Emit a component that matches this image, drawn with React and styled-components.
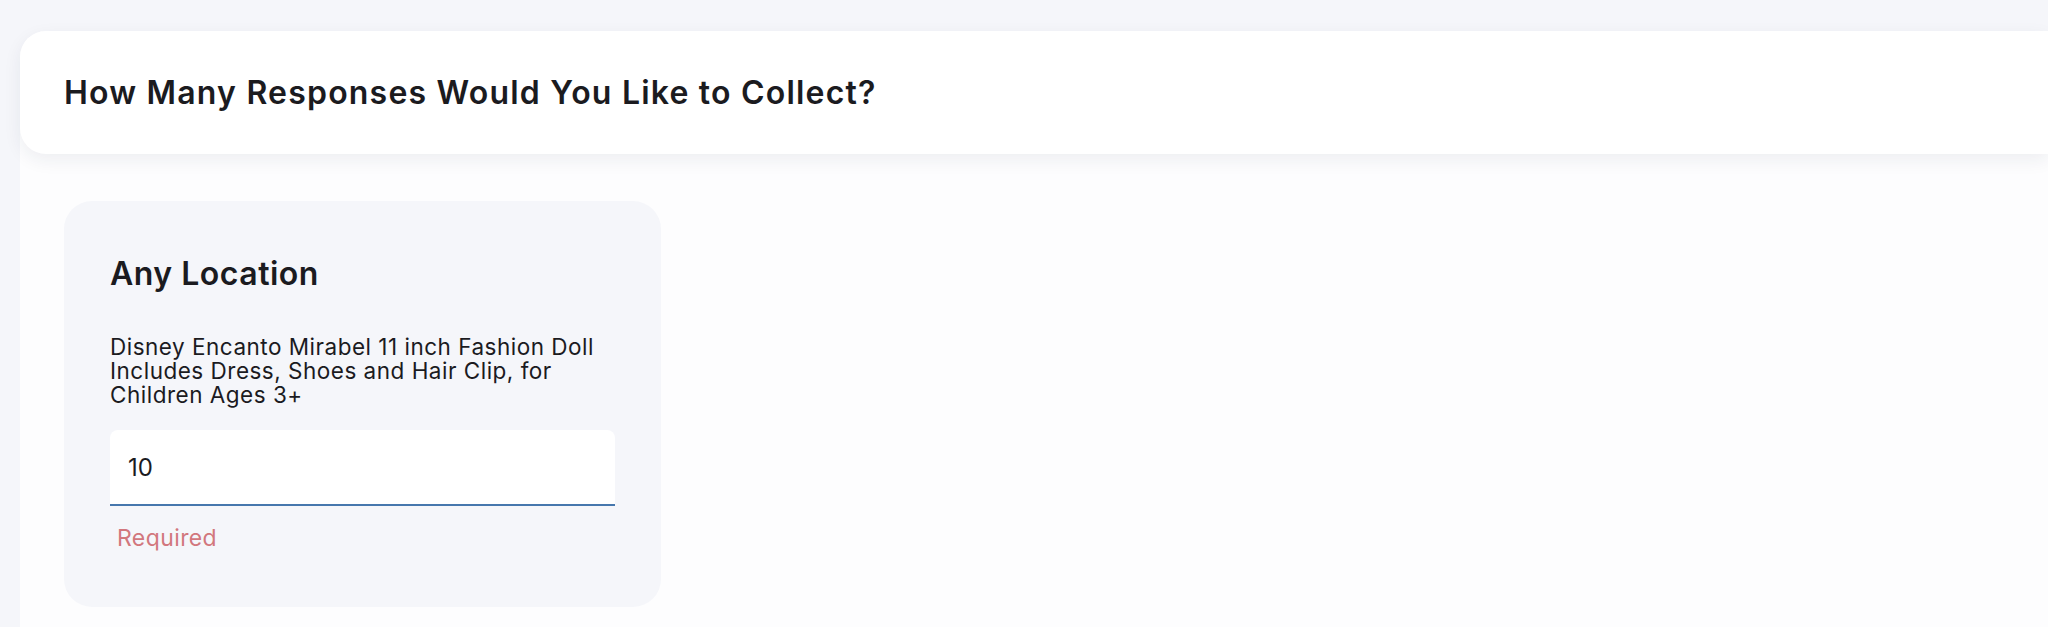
import styled, { createGlobalStyle } from "styled-components";

const GlobalStyle = createGlobalStyle`
  * { box-sizing: border-box; }
  html, body {
    margin: 0;
    padding: 0;
    background: #f5f6fa;
    font-family: Inter, "Noto Sans", sans-serif;
    color: #1b1b1f;
  }
`;

const Page = styled.div`
  min-height: 627px;
  padding: 31px 0 0 20px;
  background: #f5f6fa;
`;

const Panel = styled.main`
  min-height: 596px;
  background: #fdfdfe;
  border-top-left-radius: 26px;
`;

const Header = styled.header`
  display: flex;
  align-items: center;
  height: 123px;
  padding: 0 44px;
  background: #ffffff;
  border-radius: 26px 0 0 26px;
  box-shadow: 0 6px 18px rgba(30, 40, 70, 0.07);
`;

const Title = styled.h1`
  margin: 0;
  font-size: 32px;
  font-weight: 600;
  letter-spacing: 1.2px;
`;

const Body = styled.section`
  padding: 47px 44px;
`;

const Card = styled.div`
  display: flex;
  flex-direction: column;
  width: 597px;
  min-height: 406px;
  padding: 54px 46px 40px;
  background: #f5f6fa;
  border-radius: 28px;
`;

const CardTitle = styled.h2`
  margin: 0 0 42px;
  font-size: 32px;
  font-weight: 600;
  line-height: 38px;
  letter-spacing: 0.5px;
`;

const Description = styled.p`
  margin: 0 0 23px;
  font-size: 22.5px;
  line-height: 24px;
  font-weight: 400;
  letter-spacing: 0.5px;
`;

const Input = styled.input`
  width: 100%;
  height: 76px;
  padding: 0 18px;
  border: none;
  border-bottom: 2px solid #4677ad;
  border-radius: 8px 8px 0 0;
  background: #ffffff;
  font-family: inherit;
  font-size: 24px;
  color: #1b1b1f;
  outline: none;
`;

const ErrorText = styled.span`
  margin: 18px 0 0 7px;
  font-size: 23px;
  letter-spacing: 0.4px;
  color: #d2777d;
`;

export default function App() {
  return (
    <>
      <GlobalStyle />
      <Page>
        <Panel>
          <Header>
            <Title>How Many Responses Would You Like to Collect?</Title>
          </Header>
          <Body>
            <Card>
              <CardTitle>Any Location</CardTitle>
              <Description>
                Disney Encanto Mirabel 11 inch Fashion Doll Includes Dress, Shoes and Hair Clip, for Children Ages 3+
              </Description>
              <Input defaultValue="10" />
              <ErrorText>Required</ErrorText>
            </Card>
          </Body>
        </Panel>
      </Page>
    </>
  );
}
